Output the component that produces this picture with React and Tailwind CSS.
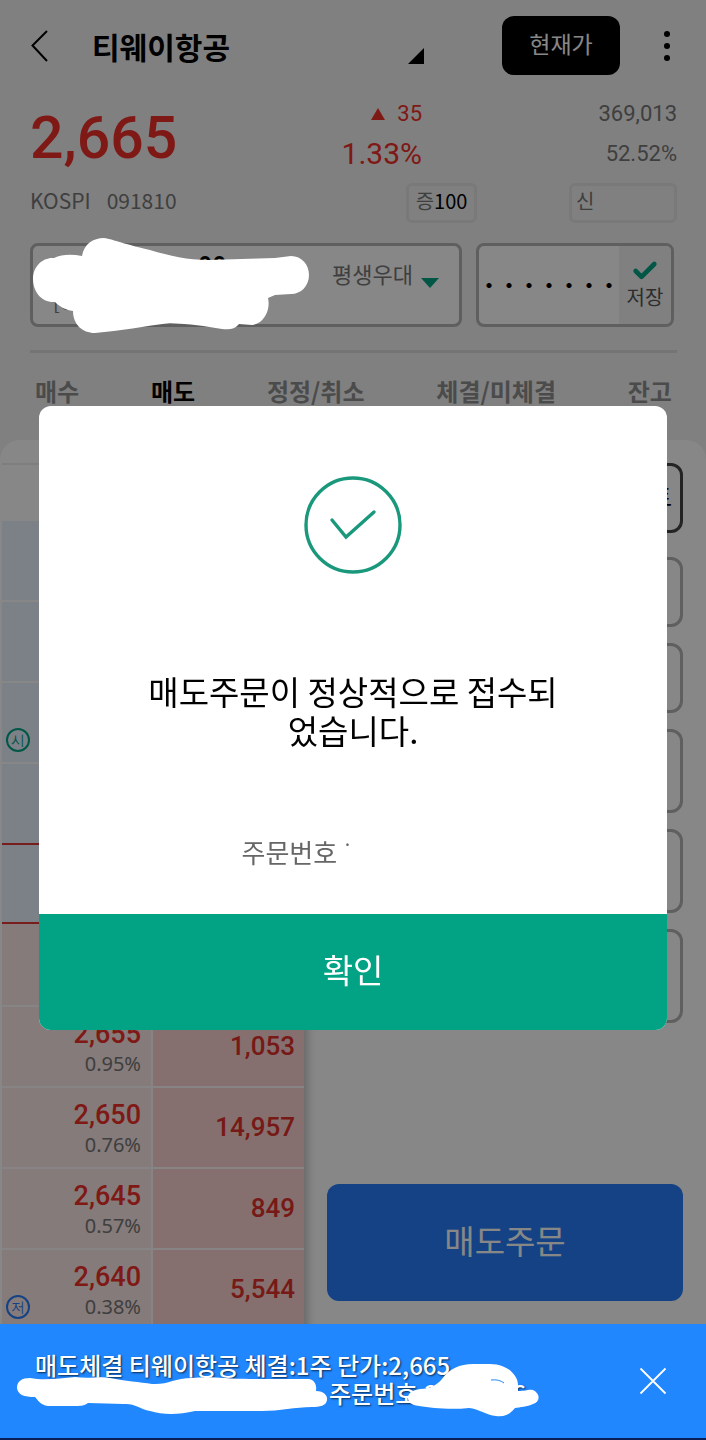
import { Check } from "lucide-react";
import { useState } from "react";

const tabs = ["매수", "매도", "정정/취소", "체결/미체결", "잔고"];

const asks = [
  { id: "a5" },
  { id: "a4" },
  { id: "a3", mark: "시" },
  { id: "a2" },
  { id: "a1", current: true },
];

const bids = [
  { id: "b1" },
  { id: "b2", price: "2,655", rate: "0.95%", amount: "1,053" },
  { id: "b3", price: "2,650", rate: "0.76%", amount: "14,957" },
  { id: "b4", price: "2,645", rate: "0.57%", amount: "849" },
  { id: "b5", price: "2,640", rate: "0.38%", amount: "5,544", mark: "저" },
];

function Header() {
  return (
    <header className="flex items-center pt-4">
      <button aria-label="뒤로" className="w-[62px]">
        <svg width="20" height="34" viewBox="0 0 20 34" fill="none" stroke="#000" strokeWidth="2">
          <path d="M17 2 2.5 16.5 17 32" />
        </svg>
      </button>
      <button className="flex flex-1 items-end justify-between text-[30px] leading-[44px] font-bold">
        티웨이항공
        <svg className="mb-1" width="16" height="16" viewBox="0 0 16 16">
          <path d="M16 0v16H0z" />
        </svg>
      </button>
      <button className="ml-[78px] h-[59px] w-[118px] rounded-xl bg-black pb-1 text-[23px] text-white">
        현재가
      </button>
      <button aria-label="메뉴" className="ml-[42px] mr-[5px]">
        <svg width="10" height="32" viewBox="0 0 10 32">
          <circle cx="5" cy="4" r="3" />
          <circle cx="5" cy="16" r="3" />
          <circle cx="5" cy="28" r="3" />
        </svg>
      </button>
    </header>
  );
}

function Quote() {
  return (
    <section>
      <div className="mt-[19px] flex items-center font-[Roboto]">
        <p className="flex-1 pt-2 text-[59px] leading-[72px] font-medium text-[#f0302b]">2,665</p>
        <div className="text-right leading-10 text-[#f0302b]">
          <p className="flex items-center justify-end gap-3 text-[22px]">
            <svg width="14" height="12" viewBox="0 0 14 12" fill="currentColor">
              <path d="M7 0l7 12H0z" />
            </svg>
            35
          </p>
          <p className="text-[30px]">1.33%</p>
        </div>
        <div className="w-[255px] text-right text-[22px] leading-10 text-[#777]">
          <p>369,013</p>
          <p>52.52%</p>
        </div>
      </div>
      <div className="mt-[9px] flex h-10 items-center text-[21px] text-[#777]">
        <p className="flex flex-1 gap-4 pb-1">
          <span>KOSPI</span>
          <span>091810</span>
        </p>
        <p className="flex h-10 w-[71px] items-center justify-center rounded-md border-3 border-[#e4e4e4] pb-1 text-[20px]">
          증<span className="text-black">100</span>
        </p>
        <p className="ml-[92px] flex h-10 w-[108px] items-center rounded-md border-3 border-[#e4e4e4] px-1 pb-1 text-[20px]">
          신
        </p>
      </div>
    </section>
  );
}

function Account() {
  return (
    <section className="relative mt-5 mr-[3px] flex h-[84px] gap-[14px]">
      <div className="flex flex-1 rounded-lg border-3 border-[#b3b3b3] bg-white">
        <div className="flex-1 pl-5">
          <p className="pl-[145px] text-[24px] leading-[36px] font-bold">00</p>
          <p className="text-[20px] leading-[40px] text-[#777]">[C</p>
        </div>
        <div className="flex items-center pr-5 pb-1">
          <select
            aria-label="계좌 구분"
            className="appearance-none pr-2 pb-5 text-[22px] leading-9 text-[#777]"
          >
            <option>평생우대</option>
          </select>
          <svg width="18" height="10" viewBox="0 0 18 10">
            <path d="M0 0h18L9 10z" fill="#02a384" />
          </svg>
        </div>
      </div>
      <div className="flex w-[198px] overflow-hidden rounded-lg border-3 border-[#b3b3b3] bg-white">
        <input
          aria-label="계좌 비밀번호"
          className="w-0 flex-1 text-[20px] font-bold outline-none"
          defaultValue="・・・・・・・"
        />
        <button className="flex w-[52px] flex-col items-center justify-center bg-[#f2f2f2] pb-1 text-[20px] leading-6 text-[#555]">
          <Check size={28} strokeWidth={4} color="#02a384" />
          저장
        </button>
      </div>
      {/* White cover over the account number, stays above the dimmed page */}
      <svg
        className="absolute top-[-6px] left-0 z-10"
        width="282"
        height="98"
        viewBox="30 237 282 98"
        fill="#fff"
      >
        <path d="M33 279C33 266 43 257 54 258C62 254 72 254 82 256C84 244 93 238 104 238C112 239 120 243 150 250C170 256 188 260 208 260L275 258L291 256C302 256 309 265 309 275C309 286 301 294 291 294L275 295L268 298C271 311 263 324 252 325L239 324C235 329 229 330 222 329C205 326 190 324 170 323C145 326 120 331 95 333C82 333 73 324 73 311C65 310 59 306 55 302C42 303 33 292 33 279Z" />
      </svg>
    </section>
  );
}

function Mark({ mark }) {
  return (
    <span
      className={`absolute bottom-[10px] left-1 flex size-6 items-center justify-center rounded-full border-2 text-[14px] leading-none ${
        mark === "시" ? "border-[#02a384] text-[#02a384]" : "border-[#267dfa] text-[#267dfa]"
      }`}
    >
      {mark}
    </span>
  );
}

function OrderBook() {
  return (
    <table className="w-[302px] table-fixed border-separate border-spacing-0 self-start border-t-2 border-[#eee] bg-white font-[Roboto] shadow-[8px_4px_8px_-4px_rgba(0,0,0,0.22)]">
      <thead>
        <tr className="h-[54px]">
          <th className="w-[149px]" aria-label="호가" />
          <th aria-label="잔량" />
        </tr>
      </thead>
      <tbody>
        {asks.map((row) => (
          <tr key={row.id} className="h-[81px]">
            <td
              className={`relative bg-[#ebf3ff] ${
                row.current ? "border-y-2 border-[#e03a36]" : "border-t-2 border-white"
              }`}
            >
              {row.mark && <Mark mark={row.mark} />}
            </td>
            <td className="bg-[#d8e6fa]" />
          </tr>
        ))}
      </tbody>
      <tbody>
        {bids.map((row) => (
          <tr key={row.id} className="h-[81px] text-right first:h-[83px]">
            <td className="relative border-b-2 border-[#fdfaf9] bg-[#fbe8e6] pt-1 pr-[10px]">
              <p className="text-[27px] leading-[31px] font-medium text-[#f0302b]">{row.price}</p>
              <p className="font-['Noto_Sans'] text-[20px] leading-[28px] text-[#777]">{row.rate}</p>
              {row.mark && <Mark mark={row.mark} />}
            </td>
            <td className="border-b-2 border-l-2 border-[#fdfaf9] bg-[#fbd3d1] pr-[9px] text-[26px] font-medium text-[#e0302b]">
              {row.amount}
            </td>
          </tr>
        ))}
      </tbody>
    </table>
  );
}

function OrderForm() {
  const field = "w-full rounded-xl border-3 border-[#b3b3b3] bg-white px-3";

  return (
    <form className="flex flex-1 flex-col" onSubmit={(e) => e.preventDefault()}>
      <button className="h-[70px] rounded-xl border-3 border-[#444] pr-2 pb-1 text-right text-[24px]">
        트
      </button>
      <input aria-label="주문 유형" className={`${field} mt-6 h-[70px]`} />
      <input aria-label="종류" className={`${field} mt-4 h-[70px]`} />
      <input aria-label="수량" className={`${field} mt-4 h-[84px]`} />
      <input aria-label="단가" className={`${field} mt-4 h-[84px]`} />
      <input aria-label="금액" className={`${field} mt-4 h-[94px]`} />
      <button className="mt-[161px] h-[117px] rounded-xl bg-[#267dfa] pb-1 text-[33px] text-white">
        매도주문
      </button>
    </form>
  );
}

function ConfirmDialog({ onClose }) {
  return (
    <div className="fixed inset-0 flex items-center justify-center bg-black/47 px-[39px] pb-1">
      <div
        role="dialog"
        aria-modal="true"
        className="flex w-full flex-col items-center overflow-hidden rounded-xl bg-white"
      >
        <svg
          className="mt-[70px]"
          width="98"
          height="98"
          viewBox="0 0 98 98"
          fill="none"
          stroke="#1a987c"
          strokeWidth="3.4"
          strokeLinecap="round"
        >
          <circle cx="49" cy="49" r="47" />
          <path d="M28 44l14 17 28-25" />
        </svg>
        <p className="mt-[98px] text-center text-[33px] leading-[39px]">
          매도주문이 정상적으로 접수되
          <br />
          었습니다.
        </p>
        <p className="mt-[82px] flex w-[223px] gap-2 text-[26px] leading-10 text-[#666]">
          주문번호<span className="font-['Noto_Sans'] text-[24px]">˙</span>
        </p>
        <button
          onClick={onClose}
          className="mt-[42px] h-[116px] w-full bg-[#02a384] pb-1 text-[33px] text-white"
        >
          확인
        </button>
      </div>
    </div>
  );
}

function Toast({ onClose }) {
  return (
    <div className="fixed inset-x-0 bottom-0 z-20 flex h-[116px] items-center border-b-2 border-[#0a1f55] bg-[#2087ff] pr-[39px] pl-[35px] text-white">
      <div className="flex-1 pb-1 text-[24px] leading-[28px] font-medium [text-shadow:1px_1px_2px_rgba(0,0,0,0.7)]">
        <p>매도체결 티웨이항공 체결:1주 단가:2,665</p>
        <p className="pl-[294px]">
          주문번호:2<span className="pl-[74px]">6</span>
        </p>
      </div>
      <button aria-label="닫기" onClick={onClose}>
        <svg width="28" height="28" viewBox="0 0 28 28" stroke="#fff" strokeWidth="1.8">
          <path d="M1.500 1.500l25 25M26.500 1.500l-25 25" />
        </svg>
      </button>
      <svg
        className="absolute top-[38px] left-0"
        width="545"
        height="58"
        viewBox="0 1362 545 58"
        fill="#fff"
      >
        <path d="M17 1388C17 1381 22 1378 30 1378C45 1381 60 1378 75 1377C90 1379 100 1376 110 1378C125 1381 140 1382 152 1384C168 1385 174 1378 192 1378C210 1376 225 1379 250 1379L308 1379C315 1379 317 1386 316 1391C324 1391 328 1396 327 1400C326 1406 320 1407 312 1407C295 1407 280 1411 262 1411L195 1411C178 1415 163 1415 150 1411C140 1409 134 1403 124 1404L88 1403C84 1406 80 1406 74 1406L48 1406C40 1405 38 1400 35 1397C24 1397 18 1395 17 1388Z" />
        <path d="M408 1398C408 1392 414 1390 420 1389C430 1389 437 1385 442 1379C449 1369 460 1364 473 1364L490 1364C506 1364 518 1374 518 1385L518 1391C526 1391 528 1389 533 1390C541 1394 540 1402 533 1404C527 1407 520 1407 515 1408C510 1414 505 1417 496 1416C486 1415 479 1409 469 1408C450 1410 432 1408 419 1406C411 1405 408 1402 408 1398Z" />
        <path d="M491 1380q8-1 13 3" fill="none" stroke="#2087ff" strokeWidth="1" />
      </svg>
    </div>
  );
}

export default function App() {
  const [dialogOpen, setDialogOpen] = useState(true);
  const [toastOpen, setToastOpen] = useState(true);
  const [activeTab, setActiveTab] = useState("매도");

  return (
    <div className="h-screen overflow-hidden bg-[#f2f2f2] font-['Noto_Sans_CJK_KR',sans-serif] text-black">
      <div className="pr-[29px] pl-[30px]">
        <Header />
        <Quote />
        <Account />
        <nav className="mt-[23px] flex justify-between border-t-3 border-[#dbdbdb] px-[5px] pt-[22px] pb-[33px] text-[24px] leading-8 font-bold">
          {tabs.map((tab) => (
            <button
              key={tab}
              onClick={() => setActiveTab(tab)}
              className={activeTab === tab ? "text-black" : "text-[#8f8f8f]"}
            >
              {tab}
            </button>
          ))}
        </nav>
      </div>

      <main className="flex gap-[23px] rounded-t-[20px] bg-white pt-[23px] pr-[23px] pl-[2px]">
        <OrderBook />
        <OrderForm />
      </main>

      {dialogOpen && <ConfirmDialog onClose={() => setDialogOpen(false)} />}
      {toastOpen && <Toast onClose={() => setToastOpen(false)} />}
    </div>
  );
}
